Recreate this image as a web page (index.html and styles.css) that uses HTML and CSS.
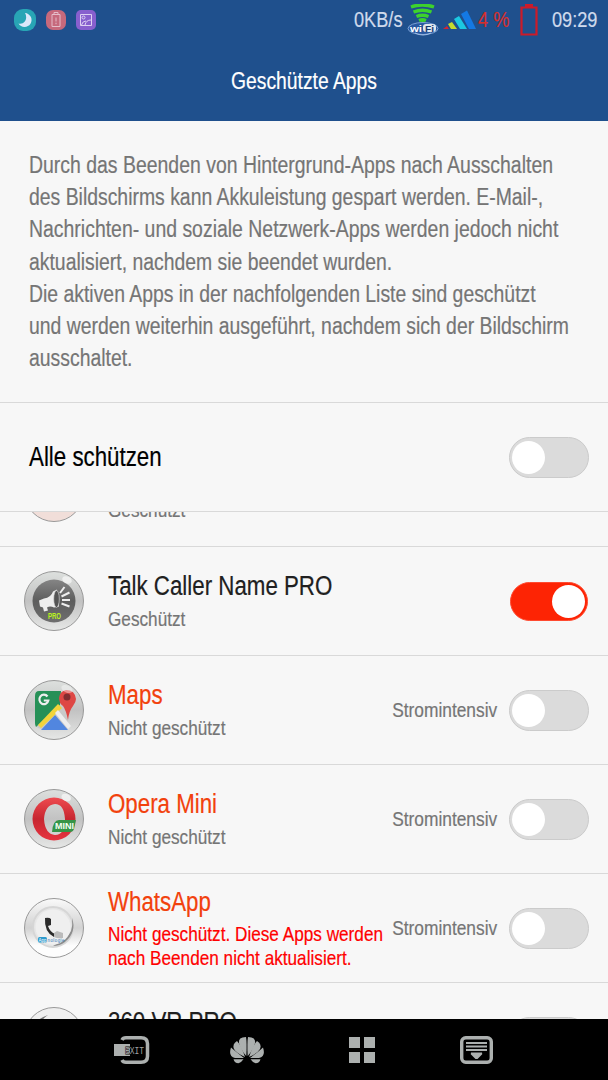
FILE: index.html
```
<!DOCTYPE html>
<html lang="de">
  <head>
    <meta charset="UTF-8" />
    <meta name="viewport" content="width=device-width, initial-scale=1.0" />
    <title>Geschützte Apps</title>
    <link rel="stylesheet" href="styles.css">
  </head>
  <body>
    <header class="header">
      <div class="status-bar">
        <div class="notifications">
          <svg width="22" height="22" viewBox="0 0 22 22">
            <rect width="22" height="22" rx="9" fill="#28a5b5" />
            <path d="M11 4a7 7 0 1 1-6.500 10.500C11 16 14 9 11 4z" fill="#dce8fa" />
          </svg>
          <svg width="20" height="20" viewBox="0 0 20 20">
            <rect width="20" height="20" rx="7" fill="#c6697c" />
            <path d="M6 4.500h8v12H6zM8 2.500h4v2H8zM10 7.500v4M10 12.700v1.500" fill="none" stroke="#e5bdc9" />
          </svg>
          <svg width="20" height="20" viewBox="0 0 20 20">
            <rect width="20" height="20" rx="5" fill="#875fce" />
            <path d="M4.500 4.500h11v11h-11zM5.500 15q1-4 4.500-4M9 15q1-5 6-5" fill="none" stroke="#ddcff3" />
            <circle cx="7.500" cy="7.500" r="1.500" fill="none" stroke="#ddcff3" />
          </svg>
        </div>
        <div class="system">
          <span class="speed">0KB/s</span>
          <svg class="wifi" width="32" height="32" viewBox="0 0 32 32">
            <g fill="none" stroke="#3dd22c" stroke-width="3.400">
              <path d="M4 3q11-4 23 0M6.500 8q9-3.500 18 0M9.500 12.500q6-2.500 12 0M12 16.500q3.500-1.500 7 0" />
            </g>
            <path d="M15.500 17v3" stroke="#3dd22c" stroke-width="2" />
            <ellipse cx="16" cy="24.500" rx="15" ry="6" fill="#2858a0" stroke="#7ba0d4" />
            <path d="M8 29q8 4 16 0" stroke="#9fbde5" fill="none" />
            <rect x="16" y="20" width="13" height="8" rx="3" fill="#dfe6ee" />
            <text x="3" y="28" class="wifi-text" fill="#fff" textLength="12" lengthAdjust="spacingAndGlyphs">wi</text>
            <text x="18" y="27.500" class="wifi-text" fill="#173b72" textLength="9" lengthAdjust="spacingAndGlyphs">Fi</text>
          </svg>
          <svg class="signal" width="34" height="20" viewBox="0 0 34 20">
            <path d="M0 19l4-3 2 3z" fill="#d52331" />
            <path d="M5 14l4-2 5 7H8z" fill="#c5dc2e" />
            <path d="M11 9l5-3 8 13h-7z" fill="#1cc8e2" />
            <path d="M18 4l6-3.500L33 19h-7z" fill="#1479e4" />
          </svg>
          <span class="percent">4 %</span>
          <svg class="battery" width="18" height="34" viewBox="0 0 18 34">
            <path d="M1.500 4.500h15v27h-15z" fill="none" stroke="#cc1b29" stroke-width="2.200" />
            <path d="M5 1h8v3H5z" fill="#cc1b29" />
          </svg>
          <span class="clock">09:29</span>
        </div>
      </div>
      <h1 class="title">Geschützte Apps</h1>
    </header>

    <p class="intro">
      <span class="wide">Durch das Beenden von Hintergrund-Apps nach Ausschalten</span>
      <span>des Bildschirms kann Akkuleistung gespart werden. E-Mail-,</span>
      <span class="wide">Nachrichten- und soziale Netzwerk-Apps werden jedoch nicht</span>
      <span>aktualisiert, nachdem sie beendet wurden.</span>
      <span>Die aktiven Apps in der nachfolgenden Liste sind geschützt</span>
      <span>und werden weiterhin ausgeführt, nachdem sich der Bildschirm</span>
      <span>ausschaltet.</span>
    </p>

    <section class="protect-all">
      <span class="protect-label">Alle schützen</span>
      <span class="toggle"></span>
    </section>

    <main class="list">
      <div class="row first">
        <svg class="icon" viewBox="0 0 60 60">
          <circle cx="30" cy="30" r="29.500" fill="#f1ded9" stroke="#999" />
        </svg>
        <div class="info">
          <div class="name">&nbsp;</div>
          <div class="state">Geschützt</div>
        </div>
      </div>

      <div class="row">
        <svg class="icon" viewBox="0 0 60 60">
          <defs>
            <linearGradient id="glass" x1="0" y1="0" x2="0" y2="1">
              <stop offset="0" stop-color="#dde0de" />
              <stop offset="0.500" stop-color="#c2c2c2" />
              <stop offset="1" stop-color="#e6e7e6" />
            </linearGradient>
            <linearGradient id="dark" x1="0" y1="0" x2="0" y2="1">
              <stop offset="0" stop-color="#858585" />
              <stop offset="0.500" stop-color="#5d5d5d" />
              <stop offset="1" stop-color="#6e6e6e" />
            </linearGradient>
          </defs>
          <circle cx="30" cy="30" r="29.500" fill="url(#glass)" stroke="#999" />
          <circle cx="30" cy="30" r="21.500" fill="url(#dark)" />
          <ellipse cx="43" cy="9" rx="5" ry="3.500" fill="#fff" opacity="0.600" transform="rotate(25 43 9)" />
          <path d="M15 29.500l5-2q7-1 9-7l4-2 2 17-5 1q-4-2-7 0l1 3-4 1-1-4-3-1z" fill="#eee" />
          <ellipse cx="32.500" cy="28" rx="2.800" ry="8.500" fill="#555" stroke="#ddd" stroke-width="0.600" />
          <path d="M36 22l4.500-6M37.500 25.500l8-4M38 29h8M37.500 32.500l8 3" stroke="#eee" stroke-width="2" />
          <text x="24" y="47.500" class="pro-text" fill="#baf51c" textLength="13" lengthAdjust="spacingAndGlyphs">PRO</text>
        </svg>
        <div class="info">
          <div class="name">Talk Caller Name PRO</div>
          <div class="state">Geschützt</div>
        </div>
        <span class="toggle on"></span>
      </div>

      <div class="row">
        <svg class="icon" viewBox="0 0 60 60">
          <circle cx="30" cy="30" r="29.500" fill="url(#glass)" stroke="#999" />
          <path d="M15 12h29v37H18q-7-1-7-7V17q0-5 4-5z" fill="#c9c9c9" />
          <path d="M15 11h22l-1 14-24 22q-1-2-1-4V16q0-5 4-5z" fill="#269057" />
          <path d="M31 35l13 15H17z" fill="#5186df" />
          <path d="M34 24l4 4-21 20-3-3z" fill="#f2d43a" />
          <path d="M31 33l3-3 13 16-3 3z" fill="#ededed" />
          <path d="M42 10q9 0 10 9 0 3-3 7-4 5-5 14-2-10-5-14-4-3-4-8 1-7 7-8z" fill="#de4744" />
          <circle cx="43" cy="17" r="3.500" fill="#822d30" />
          <ellipse cx="43" cy="9" rx="6" ry="3.500" fill="#fff" opacity="0.400" transform="rotate(25 43 9)" />
          <path d="M23.500 16.500a4.500 4.800 0 1 0 .8 4h-4.500" fill="none" stroke="#eee" stroke-width="2.200" />
        </svg>
        <div class="info">
          <div class="name warn">Maps</div>
          <div class="state">Nicht geschützt</div>
        </div>
        <span class="power">Stromintensiv</span>
        <span class="toggle"></span>
      </div>

      <div class="row">
        <svg class="icon" viewBox="0 0 60 60">
          <defs>
            <linearGradient id="opera" x1="0" y1="0" x2="0" y2="1">
              <stop offset="0" stop-color="#ee4b50" />
              <stop offset="0.500" stop-color="#c72630" />
              <stop offset="1" stop-color="#e63440" />
            </linearGradient>
          </defs>
          <circle cx="30" cy="30" r="29.500" fill="url(#glass)" stroke="#999" />
          <path d="M30 8.500a21.500 21.500 0 1 0 0 43a21.500 21.500 0 1 0 0-43zM31 15q9 0 10 15 0 16-10 16-10-1-11-16 1-14 11-15z" fill="url(#opera)" fill-rule="evenodd" />
          <path d="M28 43q1-12 7-12h17l-2 9q-1 3-4 3z" fill="#369447" />
          <text x="31" y="40" class="mini-text" fill="#f3fff3" textLength="19" lengthAdjust="spacingAndGlyphs">MINI</text>
          <ellipse cx="42" cy="8.500" rx="5" ry="3.500" fill="#fff" opacity="0.600" transform="rotate(25 42 9)" />
        </svg>
        <div class="info">
          <div class="name warn">Opera Mini</div>
          <div class="state">Nicht geschützt</div>
        </div>
        <span class="power">Stromintensiv</span>
        <span class="toggle"></span>
      </div>

      <div class="row">
        <svg class="icon" viewBox="0 0 60 60">
          <defs>
            <linearGradient id="silver" x1="0" y1="0" x2="0" y2="1">
              <stop offset="0" stop-color="#fafafa" />
              <stop offset="0.500" stop-color="#d2d2d2" />
              <stop offset="0.800" stop-color="#fdfdfd" />
            </linearGradient>
          </defs>
          <circle cx="30" cy="30" r="29.500" fill="url(#silver)" stroke="#999" />
          <circle cx="29" cy="29" r="20" fill="#e6e6e6" stroke="#d6d6d6" stroke-width="2" />
          <path d="M48 20q5 14-7 24-5 4-12 4 15-8 18-15 2-6 1-13z" fill="#8c8c8c" />
          <circle cx="29" cy="29" r="17.500" fill="#efefef" />
          <path d="M21 20q4-1 6 1v6l-3 1q2 6 7 8l-1 3q-10-5-9-19z" fill="#2b2b2b" />
          <path d="M30 35l3-2 6 2v5q-5 1-9-1z" fill="#bbb" />
          <rect x="14" y="39" width="9" height="5.500" rx="1.500" fill="#2e9bce" />
          <text x="14.500" y="43.500" class="app-text" fill="#fff">App</text>
          <text x="23.500" y="43.500" class="app-text" fill="#347bb8" textLength="17">nologie</text>
        </svg>
        <div class="info high">
          <div class="name warn">WhatsApp</div>
          <div class="state alert">Nicht geschützt. Diese Apps werden<br>nach Beenden nicht aktualisiert.</div>
        </div>
        <span class="power">Stromintensiv</span>
        <span class="toggle"></span>
      </div>

      <div class="row">
        <svg class="icon" viewBox="0 0 60 60">
          <circle cx="30" cy="30" r="29.500" fill="#efefef" stroke="#999" />
          <path d="M12 16q3-5 12-8-6 4-7 8z" fill="#777" />
        </svg>
        <div class="info">
          <div class="name">360 VR PRO</div>
          <div class="state">Geschützt</div>
        </div>
        <span class="toggle"></span>
      </div>
    </main>

    <nav class="nav-bar">
      <svg width="36" height="28" viewBox="0 0 36 28">
        <path d="M8 4q1-2.200 4-2.200h15q6.500 0 6.500 6v12.400q0 6-6.500 6H12q-3 0-4-2.200" fill="none" stroke="#acb0af" stroke-width="3.500" />
        <rect x="0" y="8" width="16" height="12" fill="#acb0af" />
        <text x="11" y="17.500" class="exit-text" textLength="19" lengthAdjust="spacingAndGlyphs">EXIT</text>
      </svg>
      <svg class="petals" width="34" height="28" viewBox="0 0 34 28">
        <g fill="#acb0af">
          <path d="M16.300 20Q17 6 16 1 8 1 9 7q1 6 7.300 13z" />
          <path d="M15 21Q11 9 7 5 2 8 4 13q2 4 11 8z" />
          <path d="M14 22Q5 15 1 11.500q-3 9 4 10.500z" />
          <path d="M13.500 23.200H3.500q1 4 5 4 3-1 5-4z" />
          <path d="M17.700 20Q17 6 18 1 26 1 25 7q-1 6-7.300 13z" />
          <path d="M19 21Q23 9 27 5 32 8 30 13q-2 4-11 8z" />
          <path d="M20 22Q29 15 33 11.500q3 9-4 10.500z" />
          <path d="M20.500 23.200h10q-1 4-5 4-3-1-5-4z" />
        </g>
      </svg>
      <svg width="26" height="26" viewBox="0 0 26 26">
        <path d="M0 0h11v11H0zM15 0h11v11H15zM0 15h11v11H0zM15 15h11v11H15z" fill="#acb0af" />
      </svg>
      <svg width="33" height="28" viewBox="0 0 33 28">
        <rect x="1.700" y="1.700" width="29.600" height="24.600" rx="4" fill="none" stroke="#acb0af" stroke-width="3.400" />
        <path d="M6 7h21M6 10.500h21M6 14h21" stroke="#acb0af" stroke-width="1.800" />
        <path d="M11 16.500h11q1 2-1 3l-3.500 3.500h-2L12 19.500q-2-1-1-3z" fill="#acb0af" />
      </svg>
    </nav>
  </body>
</html>
```
FILE: styles.css
```
* {
  box-sizing: border-box;
}

body {
  margin: 0;
  height: 1080px;
  display: flex;
  flex-direction: column;
  overflow: hidden;
  background: #f7f7f7;
  color: #202020;
  font-family: "Liberation Sans", Arial, sans-serif;
  white-space: nowrap;
  -webkit-text-stroke: 0.2px;
}

svg {
  -webkit-text-stroke: 0;
}

/* Kopfbereich */
.header {
  height: 121px;
  flex: none;
  background: #1f508d;
}

.status-bar {
  height: 40px;
  display: flex;
  justify-content: space-between;
  align-items: center;
  padding: 0 10px 0 14px;
}

.notifications {
  display: flex;
  align-items: center;
  gap: 10px;
}

.system {
  display: flex;
  align-items: center;
  font-size: 22px;
  color: #cfdaec;
}

/* schmale Schrift */
.speed,
.percent,
.clock,
.protect-label,
.name,
.state {
  transform: scaleX(0.826);
  transform-origin: left;
}

.speed {
  width: 48px;
}

.wifi {
  margin-left: 5px;
}

.wifi-text {
  font: bold 9px "Liberation Sans", sans-serif;
}

.signal {
  margin-left: 4px;
}

.percent {
  width: 31px;
  margin-left: 1px;
  color: #d52f2c;
}

.battery {
  margin: 0 14px 0 11px;
}

.clock {
  width: 46px;
}

.title {
  margin: 0;
  font-size: 23px;
  font-weight: normal;
  line-height: 82px;
  text-align: center;
  color: #fff;
  transform: scaleX(0.839);
}

/* Erklärung */
.intro {
  margin: 0;
  height: 282px;
  flex: none;
  padding: 28px 29px 0;
  border-bottom: 1px solid #d9d9d9;
  font-size: 23px;
  line-height: 32.200px;
  color: #757575;
}

.intro span {
  display: block;
  width: 0;
  transform: scaleX(0.843);
  transform-origin: left;
}

.intro .wide {
  transform: scaleX(0.845);
}

.protect-all {
  height: 109px;
  flex: none;
  display: flex;
  align-items: center;
  justify-content: space-between;
  padding: 0 19px 0 29px;
  border-bottom: 1px solid #d9d9d9;
}

.protect-label {
  font-size: 27px;
  color: #000;
}

/* App-Liste */
.list {
  flex: 1;
  overflow: hidden;
}

.row {
  height: 109px;
  display: flex;
  align-items: center;
  padding: 0 19px 0 24px;
  border-bottom: 1px solid #d9d9d9;
}

.row.first {
  margin-top: -74px;
}

.icon {
  flex: none;
  width: 60px;
  height: 60px;
  margin-right: 24px;
}

.info {
  flex: 1;
  min-width: 0;
}

.info.high {
  padding-bottom: 3px;
}

.name {
  font-size: 27px;
  line-height: 36px;
}

.state {
  font-size: 21px;
  line-height: 30px;
  color: #757575;
  transform: scaleX(0.818);
}

.warn {
  color: #f2410c;
}

.alert {
  padding-top: 2px;
  color: #f00;
  line-height: 24px;
}

.power {
  flex: none;
  margin-right: 12px;
  font-size: 21px;
  color: #757575;
  transform: scaleX(0.826);
  transform-origin: right;
}

.pro-text {
  font: bold 8.500px "Liberation Sans", sans-serif;
}

.mini-text {
  font: bold 8.500px "Liberation Sans", sans-serif;
}

.app-text {
  font: 4.500px "Liberation Sans", sans-serif;
}

.toggle {
  flex: none;
  width: 80px;
  height: 41px;
  padding: 3px;
  border: 1px solid #cbcbcb;
  border-radius: 21px;
  background: #dbdbdb;
}

.toggle::before {
  content: "";
  display: block;
  width: 33px;
  height: 33px;
  margin-left: -1px;
  border-radius: 50%;
  background: #fff;
}

.toggle.on {
  width: 78px;
  height: 39px;
  margin-right: 1px;
  border-color: #ff4a30;
  background: #fd2404;
}

.toggle.on::before {
  margin: -1px -1px 0 auto;
}

/* Navigationsleiste */
.nav-bar {
  height: 61px;
  flex: none;
  display: flex;
  align-items: center;
  justify-content: space-between;
  padding: 0 115px 0 114px;
  background: #000;
}

.petals {
  margin-left: -5px;
}

.exit-text {
  font: 11px "Liberation Mono", monospace;
  fill: #a0a4a3;
  stroke: #000;
  stroke-width: 1px;
  paint-order: stroke;
}
```
